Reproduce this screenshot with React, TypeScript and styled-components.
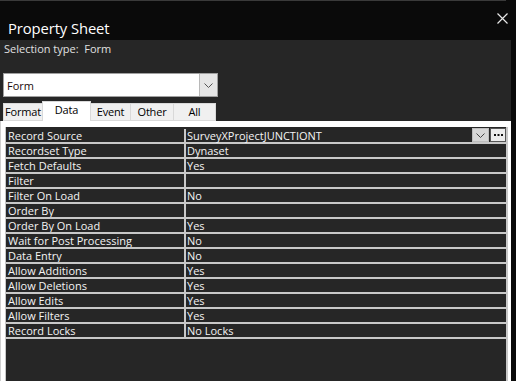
import React from "react";
import styled, { createGlobalStyle } from "styled-components";

const Global = createGlobalStyle`
  html, body { margin: 0; padding: 0; background: #0a0a0a; }
  body { font-family: "Open Sans", "Noto Sans", sans-serif; }
  * { box-sizing: border-box; }
`;

const Window = styled.div`
  width: 516px;
  height: 381px;
  display: flex;
  flex-direction: column;
  background: #0a0a0a;
  overflow: hidden;
`;

const TopLine = styled.div`
  height: 1px;
  width: 506px;
  background: #3a3a3a;
`;

const TitleBar = styled.div`
  height: 39px;
  display: flex;
  justify-content: space-between;
  align-items: flex-start;
  padding: 0 8px 0 8px;
`;

const Title = styled.div`
  color: #ffffff;
  font-size: 14.8px;
  line-height: 20px;
  margin-top: 17px;
  font-weight: 500;
  letter-spacing: -0.1px;
`;

const Close = styled.button`
  margin-top: 12px;
  width: 11px;
  height: 11px;
  padding: 0;
  border: 0;
  background: transparent;
  display: flex;
`;

const Panel = styled.div`
  flex: 1;
  margin-right: 5px;
  background: #262626;
  display: flex;
  flex-direction: column;
`;

const Selection = styled.div`
  color: #e0e0e0;
  font-size: 11px;
  line-height: 15px;
  padding: 1px 0 0 4px;
  height: 33px;
`;

const Combo = styled.div`
  margin-left: 3px;
  width: 215px;
  height: 24px;
  background: #ffffff;
  border: 1px solid #a0a0a0;
  display: flex;
  align-items: center;
  justify-content: space-between;
`;

const ComboText = styled.span`
  color: #1a0a0a;
  font-size: 11px;
  padding-left: 3px;
`;

const ComboButton = styled.div`
  width: 18px;
  height: 22px;
  background: #e6e6e6;
  border-left: 1px solid #b8b8b8;
  display: flex;
  align-items: center;
  justify-content: center;
`;

const Tabs = styled.div`
  margin-top: 4px;
  padding-left: 4px;
  height: 20px;
  display: flex;
  align-items: flex-end;
`;

const Tab = styled.div<{ $w: number; $active?: boolean }>`
  width: ${(p) => p.$w}px;
  height: ${(p) => (p.$active ? 20 : 18)}px;
  background: ${(p) => (p.$active ? "#ffffff" : "#f0f0f0")};
  border: 1px solid #d9d9d9;
  border-bottom: ${(p) => (p.$active ? "none" : "1px solid #d9d9d9")};
  margin-left: -1px;
  color: #000000;
  font-size: 11px;
  letter-spacing: -0.2px;
  line-height: 16px;
  text-align: center;
  white-space: nowrap;
`;

const Sheet = styled.div`
  flex: 1;
  background: #ffffff;
  border-left: 1px solid #cfcfcf;
  padding: 6px 3px 0 4px;
  display: flex;
`;

const Grid = styled.div`
  flex: 1;
  background: #262626;
  border-left: 1px solid #c8c8c8;
  border-right: 2px solid #c8c8c8;
  padding-top: 2px;
  display: flex;
  flex-direction: column;
`;

const Row = styled.div`
  height: 15px;
  display: grid;
  grid-template-columns: 178px 2px 1fr;
  border-bottom: 2px solid #c8c8c8;
`;

const Sep = styled.div`
  background: #c8c8c8;
`;

const Cell = styled.div`
  color: #f4f4f4;
  font-size: 11px;
  line-height: 13px;
  padding-left: 2px;
  white-space: nowrap;
  overflow: hidden;
  display: flex;
  align-items: center;
`;

const ValueCell = styled(Cell)`
  padding-left: 1px;
  position: relative;
  overflow: visible;
`;

const Buttons = styled.div`
  position: absolute;
  right: 0;
  top: -1px;
  display: flex;
  gap: 1px;
`;

const DropBtn = styled.div`
  width: 17px;
  height: 14px;
  background: #d6d6d6;
  border: 1px solid #bcbcbc;
  display: flex;
  align-items: center;
  justify-content: center;
`;

const DotsBtn = styled.div`
  width: 16px;
  height: 14px;
  background: #ececec;
  border: 1px solid #555555;
  display: flex;
  align-items: center;
  justify-content: center;
`;

const rows: [string, string][] = [
  ["Record Source", "SurveyXProjectJUNCTIONT"],
  ["Recordset Type", "Dynaset"],
  ["Fetch Defaults", "Yes"],
  ["Filter", ""],
  ["Filter On Load", "No"],
  ["Order By", ""],
  ["Order By On Load", "Yes"],
  ["Wait for Post Processing", "No"],
  ["Data Entry", "No"],
  ["Allow Additions", "Yes"],
  ["Allow Deletions", "Yes"],
  ["Allow Edits", "Yes"],
  ["Allow Filters", "Yes"],
  ["Record Locks", "No Locks"],
];

const tabs: { label: string; w: number }[] = [
  { label: "Format", w: 40 },
  { label: "Data", w: 49 },
  { label: "Event", w: 41 },
  { label: "Other", w: 44 },
  { label: "All", w: 43 },
];

const Chevron = ({ color }: { color: string }) => (
  <svg width="9" height="5" viewBox="0 0 9 5">
    <path d="M0.5 0.5 L4.5 4.5 L8.5 0.5" fill="none" stroke={color} strokeWidth="1" />
  </svg>
);

export default function App() {
  return (
    <>
      <Global />
      <Window>
        <TopLine />
        <TitleBar>
          <Title>Property Sheet</Title>
          <Close aria-label="Close">
            <svg width="11" height="11" viewBox="0 0 11 11">
              <path d="M0.5 0.5 L10.5 10.5 M10.5 0.5 L0.5 10.5" stroke="#e8e8e8" strokeWidth="1.2" />
            </svg>
          </Close>
        </TitleBar>
        <Panel>
          <Selection>Selection type:&nbsp; Form</Selection>
          <Combo>
            <ComboText>Form</ComboText>
            <ComboButton>
              <Chevron color="#555" />
            </ComboButton>
          </Combo>
          <Tabs>
            {tabs.map((t) => (
              <Tab key={t.label} $w={t.w} $active={t.label === "Data"}>
                {t.label}
              </Tab>
            ))}
          </Tabs>
          <Sheet>
            <Grid>
              {rows.map(([k, v], i) => (
                <Row key={k}>
                  <Cell>{k}</Cell>
                  <Sep />
                  <ValueCell>
                    {v}
                    {i === 0 && (
                      <Buttons>
                        <DropBtn>
                          <Chevron color="#444" />
                        </DropBtn>
                        <DotsBtn>
                          <svg width="9" height="3" viewBox="0 0 9 3">
                            <rect x="0" y="0" width="2" height="2" fill="#111" />
                            <rect x="3.5" y="0" width="2" height="2" fill="#111" />
                            <rect x="7" y="0" width="2" height="2" fill="#111" />
                          </svg>
                        </DotsBtn>
                      </Buttons>
                    )}
                  </ValueCell>
                </Row>
              ))}
            </Grid>
          </Sheet>
        </Panel>
      </Window>
    </>
  );
}
